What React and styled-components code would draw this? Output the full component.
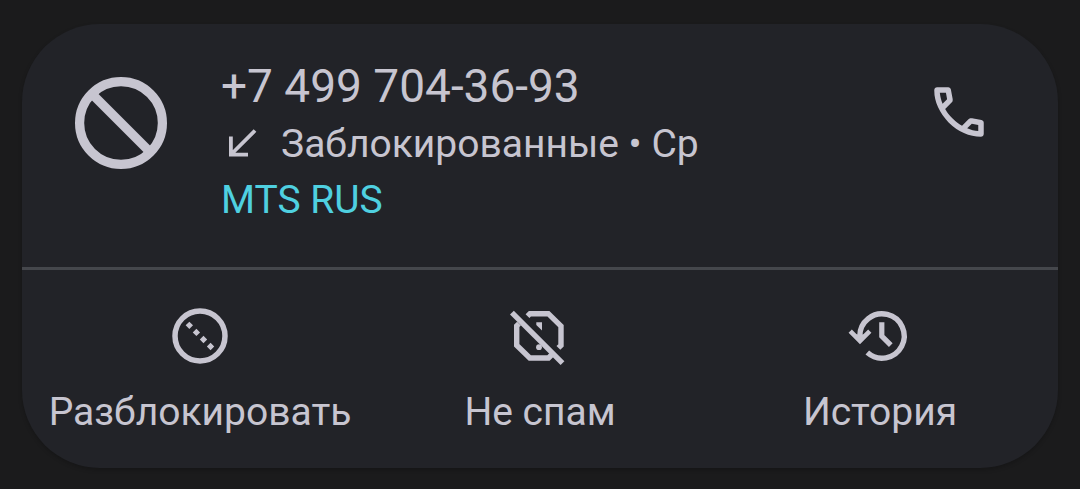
import React from "react";
import styled, { createGlobalStyle } from "styled-components";

const GlobalStyle = createGlobalStyle`
  body {
    margin: 0;
    background-color: #1b1b1c;
    color: #c7c5d0;
    font-family: Roboto, "Noto Sans", sans-serif;
  }
`;

const Page = styled.main`
  box-sizing: border-box;
  padding: 24px 22px 20px;
`;

const Card = styled.article`
  background-color: #222328;
  border-radius: 78px;
  box-shadow: 0 2px 4px rgba(0, 0, 0, 0.2);
  overflow: hidden;
`;

const Summary = styled.section`
  display: flex;
  align-items: flex-start;
  padding: 32px 66px 39px 53px;
`;

const BlockedIcon = styled.svg`
  flex: none;
  width: 92px;
  height: 92px;
  margin: 21px 54px 0 0;
`;

const CallInfo = styled.div`
  flex: 1;
  min-width: 0;
`;

const PhoneNumber = styled.h1`
  margin: 0;
  font-size: 46px;
  font-weight: 400;
  line-height: 60px;
`;

const InfoLine = styled.p`
  display: flex;
  align-items: center;
  gap: 18px;
  margin: 0;
  font-size: 39px;
  line-height: 56px;
  color: ${(props) => (props.$accent ? "#4fd0e0" : "inherit")};
`;

const DirectionIcon = styled.svg`
  flex: none;
  width: 42px;
  height: 42px;
`;

const IconButton = styled.button`
  display: flex;
  flex: none;
  margin: 23px 0 0;
  padding: 0;
  border: none;
  background: transparent;
  color: inherit;
  cursor: pointer;
`;

const Icon = styled.svg`
  display: block;
  width: 66px;
  height: 66px;
`;

const Actions = styled.section`
  display: grid;
  grid-template-columns: repeat(3, 1fr);
  padding: 0 8px;
  border-top: 3px solid #45474c;
`;

const ActionButton = styled.button`
  display: flex;
  flex-direction: column;
  align-items: center;
  gap: 15px;
  padding: 33px 0 28px;
  border: none;
  background: transparent;
  color: inherit;
  font-family: inherit;
  font-size: 39px;
  line-height: 56px;
  white-space: nowrap;
  cursor: pointer;
`;

const UnblockIcon = () => (
  <Icon viewBox="0 0 66 66" fill="none" stroke="currentColor" aria-hidden="true">
    <circle cx="33" cy="33" r="25" strokeWidth="5.5" />
    <path d="M20.5 20.5 46 46" strokeWidth="5.2" strokeDasharray="5.2 4.8" />
  </Icon>
);

const NotSpamIcon = () => (
  <Icon viewBox="0 0 66 66" fill="none" stroke="currentColor" aria-hidden="true">
    <path
      d="M20.5 13.2 23 10.7H41.3L54 23.2V42.3L51.4 44.9M12 20.6 9.7 22.9V42.3L22.8 55H41.5L46 50.5"
      strokeWidth="5.4"
    />
    <path d="M4.9 9.6 55.5 60.2" strokeWidth="5.4" />
    <path d="M29.3 19.3H35V27.4L29.3 22z" fill="currentColor" stroke="none" />
    <circle cx="32" cy="44.2" r="2.9" fill="currentColor" stroke="none" />
  </Icon>
);

const HistoryIcon = () => (
  <Icon viewBox="0 0 66 66" fill="none" stroke="currentColor" aria-hidden="true">
    <path d="M12.8 37V33A22.2 22.2 0 1 1 20.3 49.6" strokeWidth="5.4" />
    <path d="M3.2 28.2 13 38 22.8 28.2" strokeWidth="4.6" />
    <path d="M8 31.5H18L13 38z" fill="currentColor" stroke="none" />
    <path d="M34.8 19.3V33.2L43.8 42.2" strokeWidth="5.2" />
  </Icon>
);

const actions = [
  { label: "Разблокировать", icon: UnblockIcon },
  { label: "Не спам", icon: NotSpamIcon },
  { label: "История", icon: HistoryIcon },
];

const App = () => {
  return (
    <>
      <GlobalStyle />
      <Page>
        <Card>
          <Summary>
            <BlockedIcon
              viewBox="0 0 92 92"
              fill="none"
              stroke="currentColor"
              strokeWidth="9.2"
              aria-hidden="true"
            >
              <circle cx="46" cy="46" r="41.4" />
              <path d="M17 17 75 75" />
            </BlockedIcon>
            <CallInfo>
              <PhoneNumber>+7 499 704-36-93</PhoneNumber>
              <InfoLine>
                <DirectionIcon
                  viewBox="0 0 42 42"
                  fill="none"
                  stroke="currentColor"
                  strokeWidth="3.8"
                  aria-hidden="true"
                >
                  <path d="M34 7.5 9.5 32M9.9 13.5V31.6H27" />
                </DirectionIcon>
                Заблокированные • Ср
              </InfoLine>
              <InfoLine $accent>MTS RUS</InfoLine>
            </CallInfo>
            <IconButton aria-label="Позвонить">
              <Icon viewBox="0 0 24 24" fill="currentColor" aria-hidden="true">
                <path d="M19.95 21q-3.125 0-6.175-1.362t-5.55-3.863-3.862-5.55T3 4.05q0-.45.3-.75t.75-.3H8.1q.35 0 .625.238t.325.562l.65 3.5q.05.4-.025.675T9.4 8.45L6.975 10.9q.5.925 1.187 1.787t1.513 1.663q.775.775 1.625 1.438T13.1 17l2.35-2.35q.225-.225.588-.337t.712-.063l3.45.7q.35.1.575.363T21 15.9v4.05q0 .45-.3.75t-.75.3M6.025 9l1.65-1.65L7.25 5H5.025q.125 1.025.35 2.025T6.025 9m8.95 8.95q.975.425 1.988.675T19 18.95v-2.2l-2.35-.475z" />
              </Icon>
            </IconButton>
          </Summary>
          <Actions>
            {actions.map(({ label, icon: ActionIcon }) => (
              <ActionButton key={label}>
                <ActionIcon />
                {label}
              </ActionButton>
            ))}
          </Actions>
        </Card>
      </Page>
    </>
  );
};

export default App;
